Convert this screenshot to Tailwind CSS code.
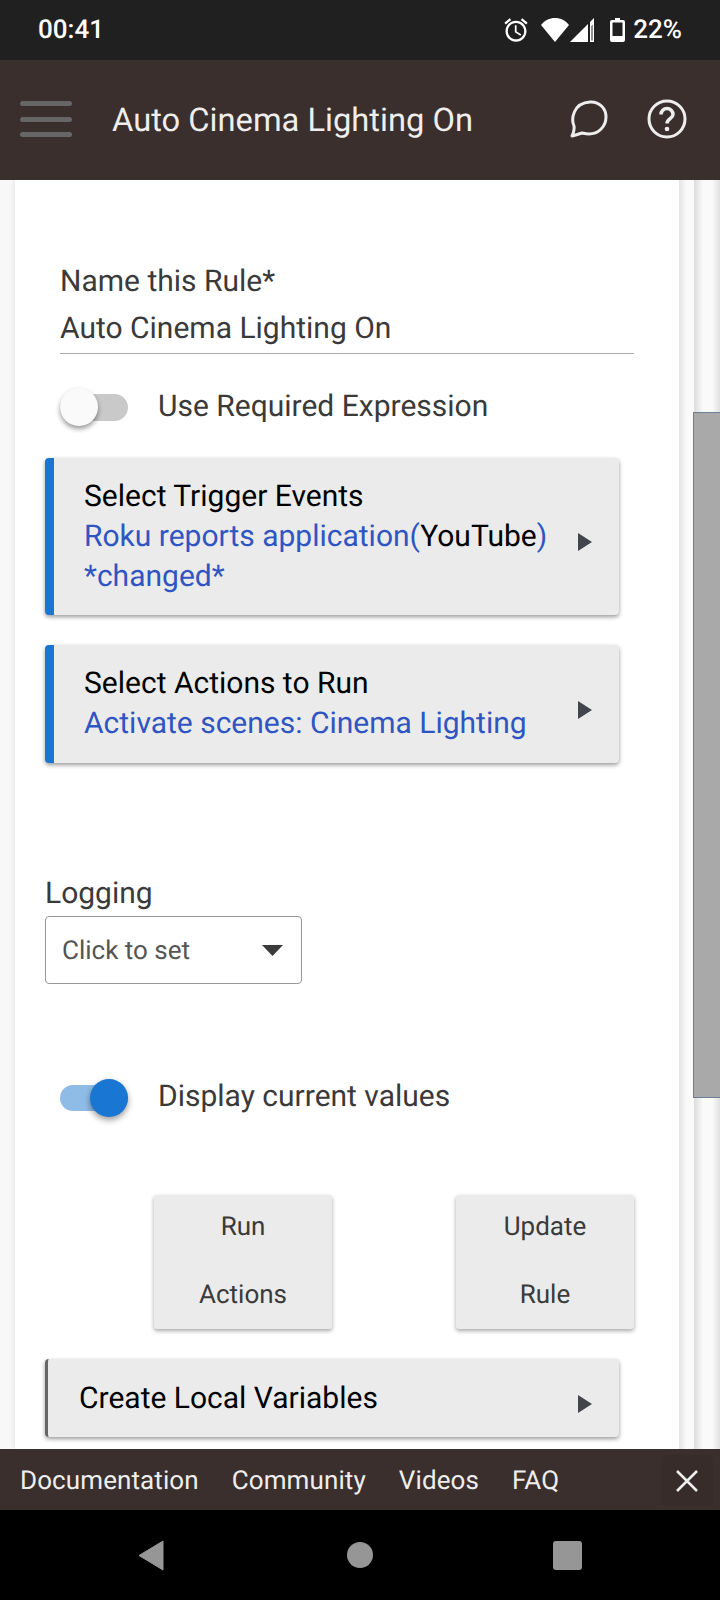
<!doctype html>
<html>
<head>
<meta charset="utf-8">
<script src="https://cdn.jsdelivr.net/npm/@tailwindcss/browser@4"></script>
</head>
<body class="bg-[#f8f8f8]">
<div class="w-[720px] h-[1600px] flex flex-col overflow-hidden font-['Roboto',sans-serif] [text-rendering:geometricPrecision]">

  <!-- status bar -->
  <div class="h-[60px] shrink-0 bg-[#202020] flex items-center text-white pl-[38px] pr-[38px]">
    <span class="text-[26px] font-medium">00:41</span>
    <div class="ml-auto flex items-center">
      <svg class="w-[28px] h-[28px]" viewBox="0 0 24 24" fill="#fff"><path d="M22 5.720l-4.600-3.860-1.290 1.530 4.600 3.860L22 5.720zM7.880 3.390L6.600 1.860 2 5.710l1.290 1.530 4.590-3.850zM12.500 8H11v6l4.750 2.850.75-1.230-4-2.370V8zM12 4c-4.970 0-9 4.030-9 9s4.030 9 9 9 9-4.030 9-9-4.030-9-9-9zm0 16c-3.870 0-7-3.130-7-7s3.130-7 7-7 7 3.130 7 7-3.130 7-7 7z"/></svg>
      <svg class="w-[28px] h-[24px] ml-[11px]" viewBox="0 0 28 24" fill="#fff"><path d="M14 24L0 7C3.500 2.500 8.500 0 14 0s10.500 2.500 14 7z"/></svg>
      <svg class="w-[24px] h-[24px] ml-[1px]" viewBox="0 0 24 24" fill="#fff"><path d="M0 24L18 6v18z"/><path d="M20 4l4-4v24h-4zM21.500 8v14.500h1V6.500z" fill-rule="evenodd"/></svg>
      <svg class="w-[15px] h-[24px] ml-[16px]" viewBox="0 0 15 24" fill="#fff"><path fill-rule="evenodd" d="M5 0h5v2h3a2 2 0 0 1 2 2v18a2 2 0 0 1-2 2H2a2 2 0 0 1-2-2V4a2 2 0 0 1 2-2h3zM2.500 4.500V18h10V4.500z"/></svg>
      <span class="text-[26px] font-medium ml-[8px] leading-none">22%</span>
    </div>
  </div>

  <!-- app bar -->
  <div class="h-[120px] shrink-0 bg-[#3b2f2d] flex items-center pl-[20px] pr-[33px] z-10">
    <div class="w-[52px] flex flex-col gap-[10.500px] -mt-[2px]">
      <div class="h-[5px] rounded-sm bg-[#666]"></div>
      <div class="h-[5px] rounded-sm bg-[#666]"></div>
      <div class="h-[5px] rounded-sm bg-[#666]"></div>
    </div>
    <span class="ml-[40px] mt-[2px] text-[32.700px] text-[#eee]">Auto Cinema Lighting On</span>
    <svg class="ml-auto w-[38px] h-[38px] -mt-[2px]" viewBox="0 0 38 38" fill="none" stroke="#eee" stroke-width="3" stroke-linejoin="round"><path d="M2 36C4 32 4.500 29 4 26 1 19 3 3 20 2c10-.5 16 7 16 15 0 10-8 17-17 17-4 0-6-1-7-1-3 1-6 2-10 3z"/></svg>
    <svg class="ml-[39px] w-[40px] h-[40px] -mt-[2px]" viewBox="0 0 40 40" fill="none" stroke="#eee" stroke-width="3"><circle cx="20" cy="20" r="18"/><path d="M14 15.500a6 6 0 0 1 12 0c0 4-6 4.500-6 9" stroke-width="3.500"/><circle cx="20" cy="30" r="2.300" fill="#eee" stroke="none"/></svg>
  </div>

  <!-- page -->
  <div class="flex-1 flex min-h-0">
    <div class="w-[664px] ml-[15px] bg-white shadow-[0_0_6px_rgba(0,0,0,0.12)] pl-[30px] text-[#3a3a3a] shrink-0">

      <div class="pl-[15px] pr-[45px] pt-[82px]">
        <div class="text-[30px] leading-[40px]">Name this Rule*</div>
        <div class="text-[30px] leading-[40px] mt-[7px] h-[45px] border-b border-[#aaa]">Auto Cinema Lighting On</div>
      </div>

      <div class="flex items-center mt-[33px] pl-[15px] h-[40px]">
        <div class="relative w-[68px] h-[27px] rounded-full bg-[#c9c9c9]">
          <div class="absolute left-0 -top-[6px] w-[38px] h-[38px] rounded-full bg-[#fafafa] shadow-[0_3px_5px_rgba(0,0,0,0.4)]"></div>
        </div>
        <span class="ml-[30px] text-[30px] -mt-[1px]">Use Required Expression</span>
      </div>

      <div class="mt-[31px] w-[574px] h-[157px] bg-[#ebebeb] border-l-[9px] border-[#1976d2] rounded-[4px] shadow-[0_2px_4px_rgba(0,0,0,0.4)] flex items-center pl-[30px] pr-[27px]">
        <div class="text-[30px] leading-[40px] text-black">
          <div>Select Trigger Events</div>
          <div class="text-[#2f55c4]"><span>Roku reports application(</span><span class="text-black">YouTube</span><span>)</span></div>
          <div class="text-[#2f55c4]">*changed*</div>
        </div>
        <svg class="ml-auto w-[14px] h-[18px] mt-[11px]" viewBox="0 0 14 18" fill="#42464c"><path d="M0 0l14 9L0 18z"/></svg>
      </div>

      <div class="mt-[30px] w-[574px] h-[118px] bg-[#ebebeb] border-l-[9px] border-[#1976d2] rounded-[4px] shadow-[0_2px_4px_rgba(0,0,0,0.4)] flex items-center pl-[30px] pr-[27px]">
        <div class="text-[30px] leading-[40px] text-black">
          <div>Select Actions to Run</div>
          <div class="text-[#2f55c4]">Activate scenes: Cinema Lighting</div>
        </div>
        <svg class="ml-auto w-[14px] h-[18px] mt-[11px]" viewBox="0 0 14 18" fill="#42464c"><path d="M0 0l14 9L0 18z"/></svg>
      </div>

      <div class="mt-[111px] text-[30px] leading-[40px]">Logging</div>
      <div class="mt-[2px] w-[257px] h-[68px] border border-[#999] rounded-[4px] flex items-center pl-[16px] pr-[18px]">
        <span class="text-[26px] text-[#555] pt-[2px]">Click to set</span>
        <svg class="ml-auto w-[21px] h-[11px]" viewBox="0 0 21 11" fill="#3a3a3a"><path d="M0 0h21L10.500 11z"/></svg>
      </div>

      <div class="flex items-center mt-[94px] pl-[15px] h-[40px]">
        <div class="relative w-[68px] h-[26px] rounded-full bg-[#8fbce6]">
          <div class="absolute right-0 -top-[6px] w-[38px] h-[38px] rounded-full bg-[#1976d2] shadow-[0_3px_6px_rgba(0,0,0,0.4)]"></div>
        </div>
        <span class="ml-[30px] text-[30px] -mt-[4px]">Display current values</span>
      </div>

      <div class="flex mt-[77px] pl-[109px]">
        <div class="w-[178px] h-[134px] bg-[#ebebeb] rounded-[3px] shadow-[0_2px_4px_rgba(0,0,0,0.35)] flex flex-col items-center text-[26px] leading-[68px]">
          <span class="-mt-[2px]">Run</span>
          <span>Actions</span>
        </div>
        <div class="ml-[124px] w-[178px] h-[134px] bg-[#ebebeb] rounded-[3px] shadow-[0_2px_4px_rgba(0,0,0,0.35)] flex flex-col items-center text-[26px] leading-[68px]">
          <span class="-mt-[2px]">Update</span>
          <span>Rule</span>
        </div>
      </div>

      <div class="mt-[30px] w-[574px] h-[78px] bg-[#ebebeb] border-l-[3px] border-[#666] rounded-[4px] shadow-[0_2px_4px_rgba(0,0,0,0.4)] flex items-center pl-[31px] pr-[27px]">
        <span class="text-[30px] text-black">Create Local Variables</span>
        <svg class="ml-auto w-[14px] h-[18px] mt-[11px]" viewBox="0 0 14 18" fill="#42464c"><path d="M0 0l14 9L0 18z"/></svg>
      </div>
    </div>

    <!-- scrollbar -->
    <div class="w-[15px] shrink-0 bg-[linear-gradient(90deg,#e4e4e4,#fafafa_50%,#fafafa)]"></div>
    <div class="flex-1 bg-[linear-gradient(90deg,#dcdcdc,#fafafa_35%,#fafafa_70%,#e0e0e0)]">
      <div class="mt-[232px] -ml-[1px] h-[686px] bg-[#a9a9a9] border border-[#6b7f99] border-r-0"></div>
    </div>
  </div>

  <!-- footer links -->
  <div class="h-[61px] shrink-0 bg-[#3b2f2d] flex items-center text-[26px] tracking-[0.1px] text-[#eee] pl-[20px] pt-[3px] relative">
    <span>Documentation</span>
    <span class="ml-[33px]">Community</span>
    <span class="ml-[33px]">Videos</span>
    <span class="ml-[33px]">FAQ</span>
    <div class="absolute left-[661px] top-[6px] w-[52px] h-[52px] rounded-[6px] bg-[#382c2a] flex items-center justify-center">
      <svg class="w-[22px] h-[22px]" viewBox="0 0 22 22" stroke="#eee" stroke-width="2.500"><path d="M1 1l20 20M21 1L1 21"/></svg>
    </div>
  </div>

  <!-- nav bar -->
  <div class="h-[90px] shrink-0 bg-black flex items-center">
    <svg class="ml-[138px] w-[26px] h-[31px]" viewBox="0 0 26 31" fill="#969696" stroke="#969696" stroke-linejoin="round"><path d="M25 1v29L1 15.500z"/></svg>
    <div class="ml-[183px] w-[26px] h-[26px] rounded-full bg-[#969696]"></div>
    <div class="ml-[180px] w-[29px] h-[29px] rounded-[3px] bg-[#969696]"></div>
  </div>
</div>
</body>
</html>
